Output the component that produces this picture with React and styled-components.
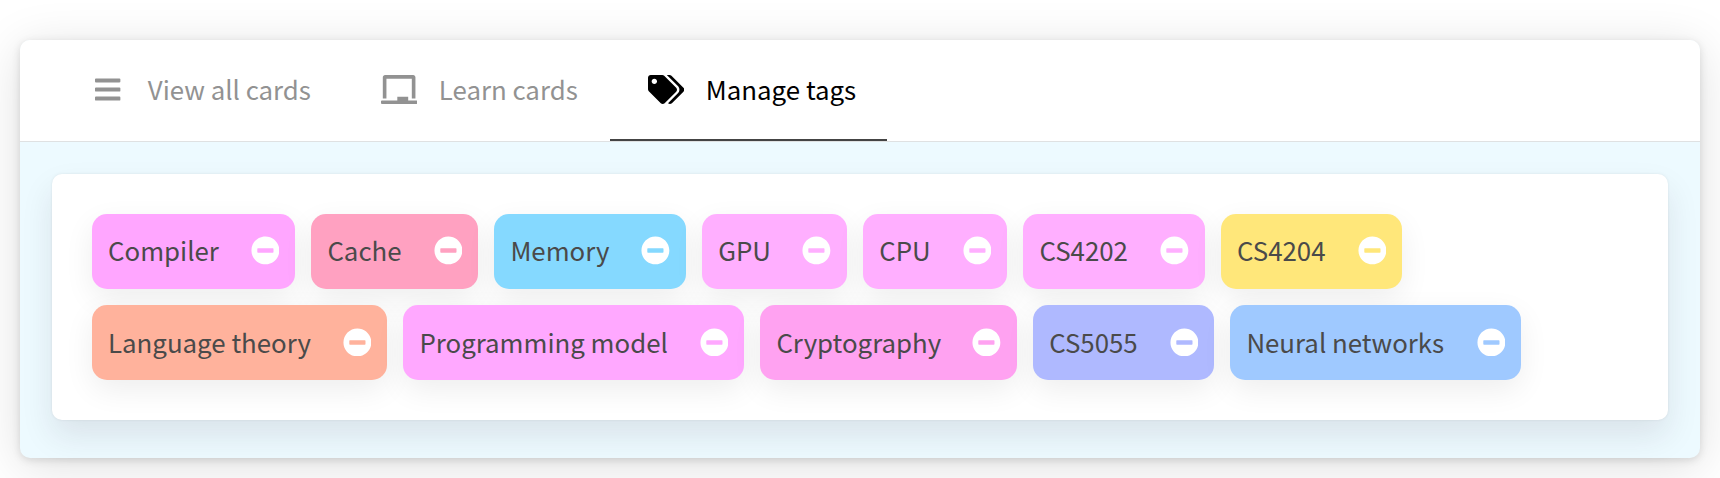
import React from "react";
import styled, { createGlobalStyle } from "styled-components";
import { FaBars, FaChalkboard, FaTags, FaMinusCircle } from "react-icons/fa";

const GlobalStyle = createGlobalStyle`
  * { box-sizing: border-box; }
  body {
    margin: 0;
    background: #fff;
    overflow: hidden;
    font-family: "Source Sans Pro", "Noto Sans CJK SC", sans-serif;
  }
`;

const Page = styled.main`
  height: 478px;
  padding: 40px 20px 20px;
`;

const Card = styled.section`
  height: 418px;
  border-radius: 10px;
  background: #edfaff;
  box-shadow: 0 8px 50px rgba(0, 0, 0, 0.13), 0 2px 8px rgba(0, 0, 0, 0.13);
`;

const TabBar = styled.nav`
  display: flex;
  height: 102px;
  padding-left: 32px;
  border-bottom: 1px solid #dfe1e2;
  border-radius: 10px 10px 0 0;
  background: #fff;
`;

const Tab = styled.a`
  display: flex;
  align-items: center;
  width: ${(p) => p.$width}px;
  height: 101px;
  padding: 0 0 2px 37.5px;
  border-bottom: 2px solid ${(p) => (p.$active ? "#444" : "transparent")};
  color: ${(p) => (p.$active ? "#000" : "#929292")};
  font-size: 25.83px;
  line-height: 40px;
  white-space: nowrap;
`;

const TabIcon = styled.span`
  display: flex;
  justify-content: center;
  width: 37px;
  margin-right: 21.3px;
  padding-top: 1px;
  font-size: 29px;

  svg {
    flex: none;
    width: ${(p) => p.$width}em;
    height: 1em;
  }
`;

const Panel = styled.div`
  height: 246px;
  margin: 32px 32px 0;
  padding: 40px;
  border-radius: 10px;
  background: #fff;
  box-shadow: 0 16px 32px rgba(50, 30, 50, 0.1), 0 0 3px rgba(0, 0, 0, 0.08);
`;

const TagList = styled.div`
  display: flex;
  flex-wrap: wrap;
  gap: 16.4px 16px;
`;

const Tag = styled.div`
  display: flex;
  align-items: center;
  justify-content: space-between;
  width: ${(p) => p.$width}px;
  height: 75px;
  padding: 0 16px;
  border-radius: 15px;
  background: ${(p) => p.$color};
  box-shadow: 0 10px 30px rgba(0, 0, 0, 0.07);
  color: #4a4a4a;
  font-size: 25.83px;
  line-height: 40px;
  white-space: nowrap;
`;

const TagName = styled.span`
  margin-bottom: 2.4px;
`;

const RemoveButton = styled.span`
  display: flex;
  margin-bottom: 1.8px;
  color: #fff;
  font-size: 28.8px;
`;

const tabs = [
  { label: "View all cards", icon: FaBars, iconWidth: 0.875, width: 291 },
  { label: "Learn cards", icon: FaChalkboard, iconWidth: 1.25, width: 267 },
  { label: "Manage tags", icon: FaTags, iconWidth: 1.25, width: 277.4, active: true },
];

const tags = [
  { name: "Compiler", color: "#ffa6ff", width: 203.4 },
  { name: "Cache", color: "#ffa1c1", width: 167 },
  { name: "Memory", color: "#85d9ff", width: 191.8 },
  { name: "GPU", color: "#ffafff", width: 145 },
  { name: "CPU", color: "#ffafff", width: 144.2 },
  { name: "CS4202", color: "#ffafff", width: 181.6 },
  { name: "CS4204", color: "#ffe77a", width: 181.4 },
  { name: "Language theory", color: "#ffb29c", width: 295.4 },
  { name: "Programming model", color: "#ffa8ff", width: 341 },
  { name: "Cryptography", color: "#ffa2f1", width: 256.8 },
  { name: "CS5055", color: "#afb9ff", width: 181.2 },
  { name: "Neural networks", color: "#9fc9ff", width: 291 },
];

export default function App() {
  return (
    <Page>
      <GlobalStyle />
      <Card>
        <TabBar>
          {tabs.map(({ label, icon: Icon, iconWidth, width, active }) => (
            <Tab key={label} $width={width} $active={active}>
              <TabIcon $width={iconWidth}>
                <Icon />
              </TabIcon>
              <span>{label}</span>
            </Tab>
          ))}
        </TabBar>
        <Panel>
          <TagList>
            {tags.map(({ name, color, width }) => (
              <Tag key={name} $color={color} $width={width}>
                <TagName>{name}</TagName>
                <RemoveButton>
                  <FaMinusCircle />
                </RemoveButton>
              </Tag>
            ))}
          </TagList>
        </Panel>
      </Card>
    </Page>
  );
}
